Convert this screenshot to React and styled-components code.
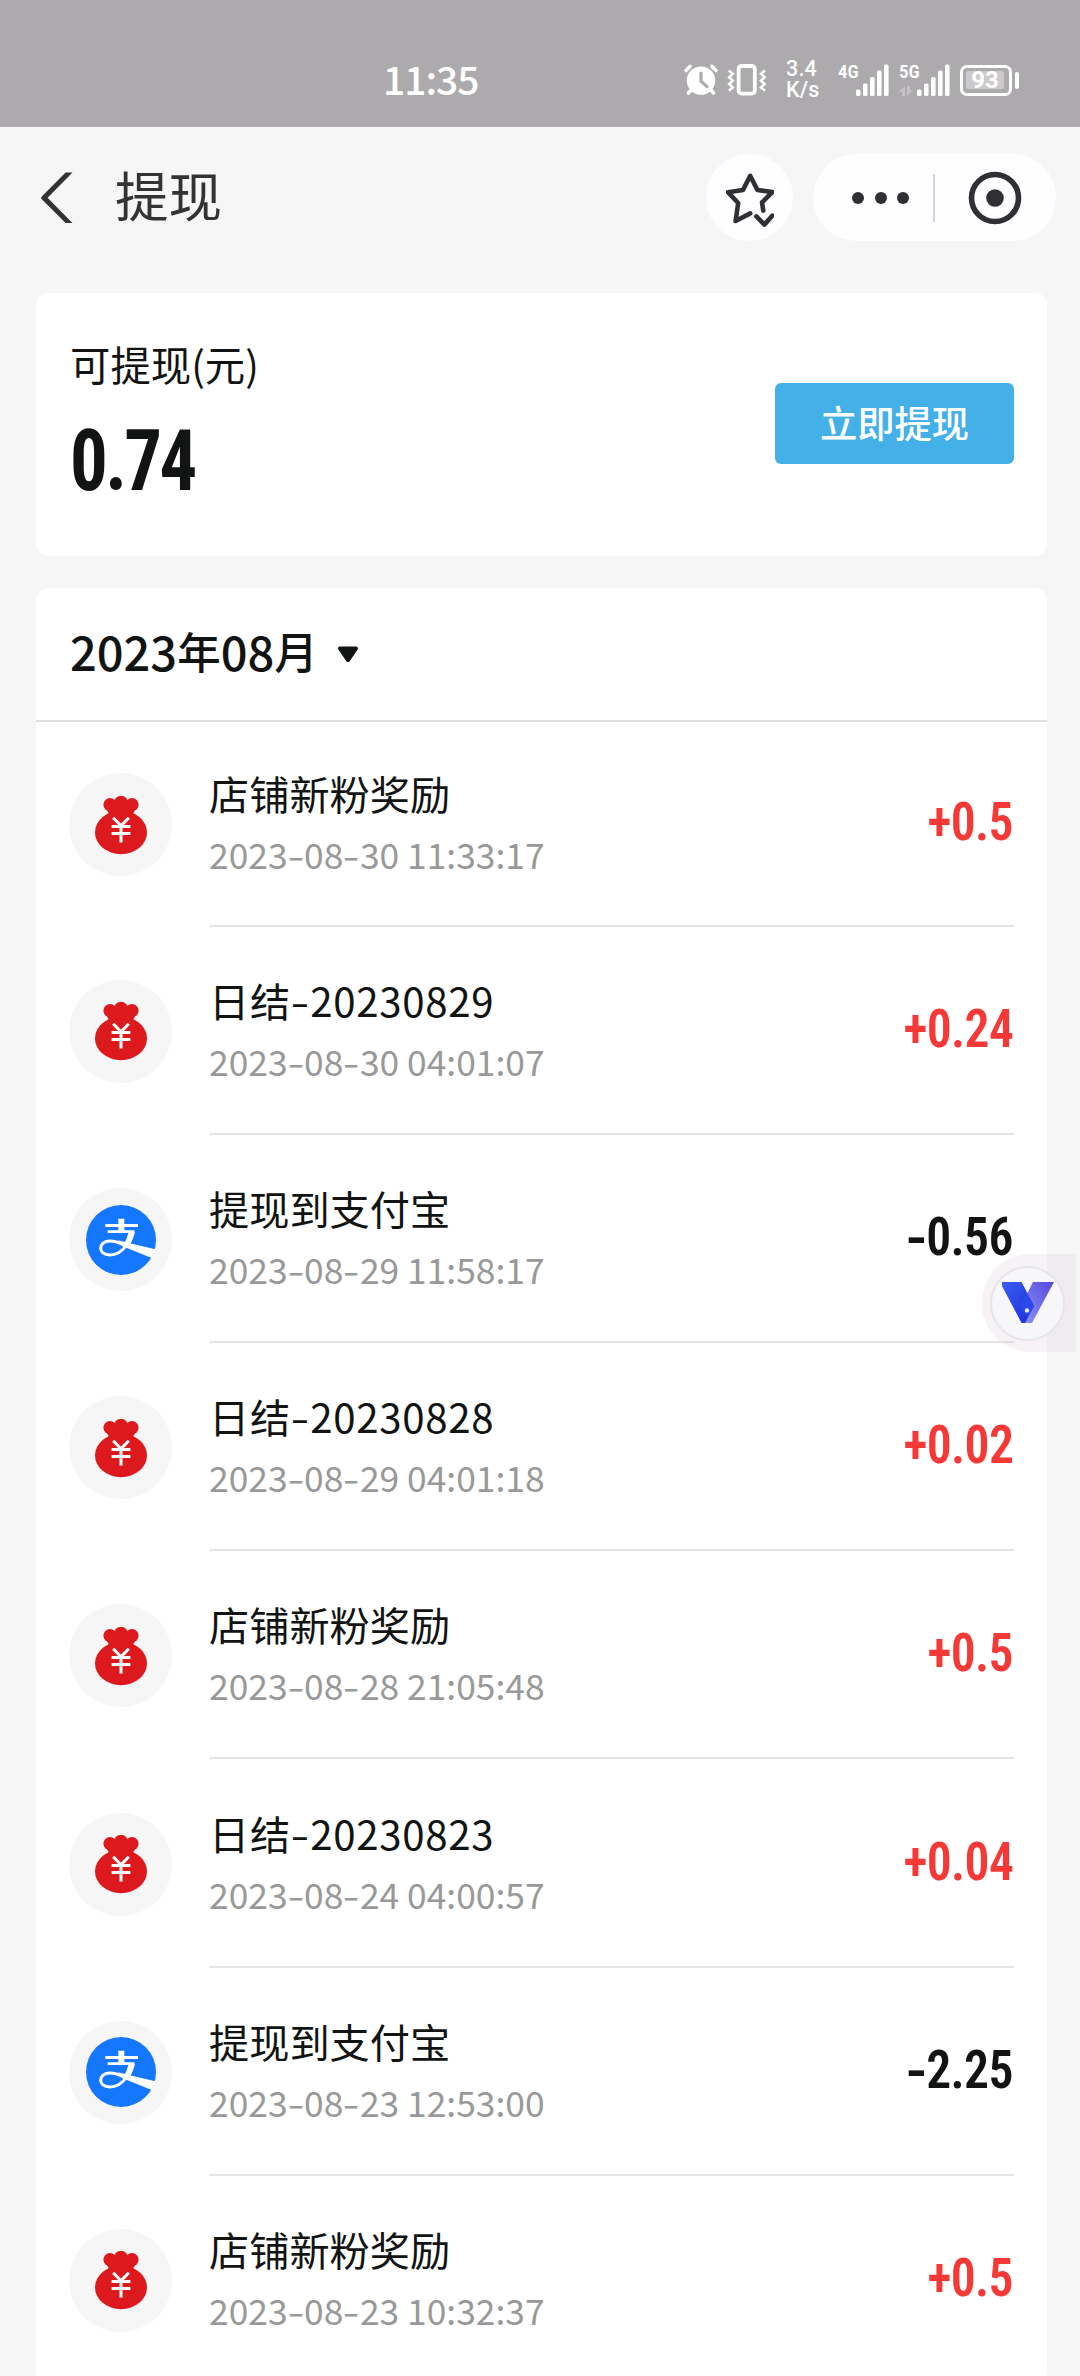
import styled, { createGlobalStyle } from 'styled-components'

const records = [
  { id: 1, type: 'bag', title: '店铺新粉奖励', time: '2023-08-30 11:33:17', amount: '+0.5' },
  { id: 2, type: 'bag', title: '日结-20230829', time: '2023-08-30 04:01:07', amount: '+0.24' },
  { id: 3, type: 'alipay', title: '提现到支付宝', time: '2023-08-29 11:58:17', amount: '-0.56' },
  { id: 4, type: 'bag', title: '日结-20230828', time: '2023-08-29 04:01:18', amount: '+0.02' },
  { id: 5, type: 'bag', title: '店铺新粉奖励', time: '2023-08-28 21:05:48', amount: '+0.5' },
  { id: 6, type: 'bag', title: '日结-20230823', time: '2023-08-24 04:00:57', amount: '+0.04' },
  { id: 7, type: 'alipay', title: '提现到支付宝', time: '2023-08-23 12:53:00', amount: '-2.25' },
  { id: 8, type: 'bag', title: '店铺新粉奖励', time: '2023-08-23 10:32:37', amount: '+0.5' },
]

// the default hyphen is too short, so every one gets its own span
function Dashed({ text }) {
  return text.split(/(-)/).map((part, i) => (part === '-' ? <Dash key={i}>-</Dash> : part))
}

function AlarmIcon() {
  return (
    <svg width="36" height="34" viewBox="0 0 36 34">
      <g stroke="#fff" strokeLinecap="round" strokeWidth="3.6">
        <path d="M3 7.5l4.2-4.2M33 7.5l-4.2-4.2" />
        <path d="M9 26l-3.6 4M27 26l3.6 4" />
      </g>
      <circle cx="18" cy="17.6" r="14.2" fill="#fff" />
      <path d="M18 10v8.2l6 5.4" fill="none" stroke="#acaaac" strokeWidth="3.2" strokeLinecap="round" />
    </svg>
  )
}

function VibrateIcon() {
  return (
    <svg width="40" height="34" viewBox="0 0 40 34" fill="none" stroke="#fff">
      <rect x="11.6" y="3" width="16.2" height="27.6" rx="3" strokeWidth="3.8" />
      <path d="M1.8 7.5l4 3.4-3.6 3.4 3.6 3.4-3.6 3.4 3.6 3.4-4 3.2" strokeWidth="2.6" />
      <path d="M38 7.5l-4 3.4 3.6 3.4-3.6 3.4 3.6 3.4-3.6 3.4 4 3.2" strokeWidth="2.6" />
    </svg>
  )
}

function Bars() {
  return (
    <svg width="33" height="32" viewBox="0 0 33 32" fill="#fff">
      <rect x="0" y="25.5" width="4.6" height="6.5" rx="1.6" />
      <rect x="7" y="19.5" width="4.6" height="12.5" rx="1.6" />
      <rect x="14" y="13" width="4.6" height="19" rx="1.6" />
      <rect x="21" y="6.5" width="4.6" height="25.5" rx="1.6" />
      <rect x="28" y="0.5" width="4.6" height="31.5" rx="1.6" />
    </svg>
  )
}

function DataArrows() {
  return (
    <svg width="14" height="10" viewBox="0 0 14 10" fill="#c4c2c4">
      <path d="M6 10V0L0 5.4h3V10zM8 0v10L14 4.6h-3V0z" />
    </svg>
  )
}

function BackIcon() {
  return (
    <svg width="32" height="52" viewBox="0 0 32 52">
      <path d="M24.6 0.5h6.9L6.6 25.8 31.5 51h-6.9L0.8 27.2q-1.2-1.3 0-2.6z" fill="#333" />
    </svg>
  )
}

function StarIcon() {
  return (
    <svg width="48" height="54" viewBox="0 0 48 54" fill="none" stroke="#303032" strokeWidth="4.6" strokeLinecap="round" strokeLinejoin="round">
      <path d="M37.3 37.6L36 29.4 46.4 19 31.4 17 24.2 2.8 17 17 2 19.2 12.2 30 9.6 48 24.2 40.4" />
      <path d="M30.4 43.4l8 8.2 8-9" />
    </svg>
  )
}

function TargetIcon() {
  return (
    <svg width="54" height="54" viewBox="0 0 54 54">
      <circle cx="27" cy="27" r="23.5" fill="none" stroke="#303032" strokeWidth="5.6" />
      <circle cx="27" cy="27" r="8.8" fill="#303032" />
    </svg>
  )
}

function BagIcon() {
  return (
    <svg width="54" height="60" viewBox="0 0 54 60">
      <g fill="#dc1a1e">
        <ellipse cx="27" cy="37.4" rx="26" ry="21.8" />
        <circle cx="16" cy="9.6" r="6.6" />
        <circle cx="27" cy="7.8" r="7" />
        <circle cx="38" cy="9.6" r="6.6" />
        <path d="M10.2 12.6q4.8 4 4.6 8L6.6 26h40.8l-8.2-5.4q-.2-4 4.6-8L38 5H16z" />
      </g>
      <path d="M19.2 22.8l7.8 8 7.8-8M27 30v17.4M17.6 31.4h18.8M17.6 38.4h18.8" fill="none" stroke="#fff" strokeWidth="3" />
    </svg>
  )
}

function AlipayIcon() {
  return (
    <svg width="70" height="70" viewBox="0 0 210 210">
      <circle cx="105" cy="105" r="105" fill="#1477fe" />
      <g fill="#fff">
        <path d="M58 57h98v9H58zM97 41h18v40H97zM65 76h80v8H65z" />
        <path d="M128 80h19q-7 30-21 46l-14-7q12-18 16-39z" />
        <path d="M96 106q20 4 48 12l64 15q-3 13-11 26L110 124z" />
      </g>
      <path
        d="M122 120C108 140 92 150 72 150 34 150 36 110 70 108 90 107 102 114 118 122"
        fill="none"
        stroke="#fff"
        strokeWidth="9"
      />
    </svg>
  )
}

function VLogo() {
  return (
    <svg width="54" height="44" viewBox="0 0 54 44">
      <defs>
        <linearGradient id="vLeft" x1="0" y1="0" x2="1" y2="1">
          <stop offset="0" stopColor="#3a5df5" />
          <stop offset="1" stopColor="#1a30d6" />
        </linearGradient>
        <linearGradient id="vRight" x1="1" y1="0" x2="0" y2="1">
          <stop offset="0" stopColor="#5548dc" />
          <stop offset="1" stopColor="#8d94f6" />
        </linearGradient>
      </defs>
      <path d="M32 1h21L31 42h-7l-3-19z" fill="url(#vRight)" />
      <path d="M1 1h19.6L33 25l-9 17h-3.4L1 5z" fill="url(#vLeft)" />
      <path d="M25.4 11L33 25l-6 11-8-10z" fill="#2d48ea" />
      <circle cx="26" cy="29.4" r="2.2" fill="#e4e9ff" />
    </svg>
  )
}

function App() {
  return (
    <Page>
      <GlobalStyle />
      <StatusBar>
        <Clock>11:35</Clock>
        <AlarmIcon />
        <Vibrate>
          <VibrateIcon />
        </Vibrate>
        <Speed>
          <span>3.4</span>
          <span>K/s</span>
        </Speed>
        <Signal>
          <Network>
            <span>4G</span>
          </Network>
          <Bars />
        </Signal>
        <Signal>
          <Network>
            <span>5G</span>
            <DataArrows />
          </Network>
          <Bars />
        </Signal>
        <Battery>
          <Level>93</Level>
        </Battery>
        <Nub />
      </StatusBar>

      <NavBar>
        <BackIcon />
        <PageTitle>提现</PageTitle>
        <RoundButton>
          <StarIcon />
        </RoundButton>
        <Capsule>
          <Dots>
            <i />
            <i />
            <i />
          </Dots>
          <Split />
          <TargetIcon />
        </Capsule>
      </NavBar>

      <Balance>
        <div>
          <Label>可提现(元)</Label>
          <Total>0.74</Total>
        </div>
        <Withdraw>立即提现</Withdraw>
      </Balance>

      <Records>
        <Month>
          <b>2023</b>年<b>08</b>月
          <svg width="22" height="17" viewBox="0 0 22 17">
            <path d="M3 2.4h16L11 14z" fill="#111413" stroke="#111413" strokeWidth="4" strokeLinejoin="round" />
          </svg>
        </Month>
        {records.map((item) => (
          <Row key={item.id}>
            <Avatar>{item.type === 'bag' ? <BagIcon /> : <AlipayIcon />}</Avatar>
            <Content>
              <div>
                <Title $spaced={item.title.includes('-')}>
                  <Dashed text={item.title} />
                </Title>
                <Time>
                  <Dashed text={item.time} />
                </Time>
              </div>
              <Amount $income={item.amount[0] === '+'}>
                <Dashed text={item.amount} />
              </Amount>
            </Content>
          </Row>
        ))}
      </Records>

      <Floating>
        <FloatingBall>
          <VLogo />
        </FloatingBall>
      </Floating>
    </Page>
  )
}

export default App

const GlobalStyle = createGlobalStyle`
  * {
    box-sizing: border-box;
  }
  body {
    margin: 0;
    background: #f6f6f6;
  }
  svg {
    display: block;
    flex-shrink: 0;
  }
`

const Page = styled.div`
  position: relative;
  width: 1080px;
  height: 2376px;
  overflow: hidden;
  background: #f6f6f6;
  color: #111413;
  font-family: 'Noto Sans CJK SC', sans-serif;
`

const StatusBar = styled.header`
  display: flex;
  align-items: center;
  height: 127px;
  padding: 33px 0 0 383px;
  background: #acaaac;
  color: #fff;
`

const Clock = styled.div`
  width: 300px;
  font-size: 39px;
  font-weight: 500;
  line-height: 40px;
  letter-spacing: -1px;
  margin-top: -4px;
`

const Vibrate = styled.div`
  margin-left: 8px;
`

const Speed = styled.div`
  display: flex;
  flex-direction: column;
  width: 52px;
  margin-left: 19px;
  font-family: Roboto, sans-serif;
  font-size: 21.5px;
  font-weight: 500;
  line-height: 20.6px;
  letter-spacing: 0.2px;
`

const Signal = styled.div`
  display: flex;
  align-items: flex-end;
  height: 32px;
  margin-right: 10px;
`

const Network = styled.div`
  display: flex;
  flex-direction: column;
  justify-content: space-between;
  height: 32px;
  width: 18px;
  font-family: 'Roboto Condensed', Roboto, sans-serif;
  font-size: 19px;
  font-weight: 600;
  line-height: 15px;
`

const Battery = styled.div`
  width: 52px;
  height: 31px;
  padding: 3px;
  border: 3.5px solid #fff;
  border-radius: 7px;
`

const Level = styled.div`
  width: 38px;
  height: 18px;
  background: #cccacc;
  border-radius: 2px;
  font-family: Roboto, sans-serif;
  font-size: 24px;
  font-weight: 700;
  line-height: 19px;
  text-align: center;
`

const Nub = styled.div`
  width: 4px;
  height: 17px;
  margin-left: 3px;
  background: #fff;
  border-radius: 2px;
`

const NavBar = styled.nav`
  display: flex;
  align-items: center;
  height: 166px;
  padding: 0 24px 25px 41px;
`

const PageTitle = styled.h1`
  flex: 1;
  margin: 0 0 0 42px;
  font-size: 53.5px;
  line-height: 60px;
  padding-bottom: 8px;
  font-weight: 400;
  color: #333;
`

const RoundButton = styled.div`
  display: flex;
  align-items: center;
  justify-content: center;
  width: 87px;
  height: 87px;
  padding-top: 4px;
  margin-right: 20px;
  background: #fefdff;
  border-radius: 50%;
`

const Capsule = styled.div`
  display: flex;
  align-items: center;
  width: 243px;
  height: 87px;
  padding-left: 39px;
  background: #fefdff;
  border-radius: 44px;
`

const Dots = styled.div`
  display: flex;
  gap: 10.5px;
  i {
    width: 12px;
    height: 12px;
    background: #303032;
    border-radius: 50%;
  }
`

const Split = styled.div`
  width: 1.5px;
  height: 48px;
  margin: 0 33px 0 24px;
  background: #d6d4d8;
`

const Balance = styled.section`
  display: flex;
  align-items: flex-start;
  justify-content: space-between;
  width: 1011px;
  height: 263px;
  margin: 0 0 32px 36px;
  padding: 42px 33px 0 34px;
  background: #fff;
  border-radius: 12px;
`

const Label = styled.div`
  font-size: 40.4px;
  line-height: 58px;
`

const Total = styled.div`
  margin-top: 18px;
  font-family: 'Roboto Condensed', Roboto, sans-serif;
  font-size: 85px;
  font-weight: 700;
  line-height: 100px;
  letter-spacing: -3px;
  transform: scaleX(0.88);
  transform-origin: left;
`

const Withdraw = styled.button`
  width: 239px;
  height: 81px;
  margin-top: 48px;
  padding: 0 0 4px;
  border: 0;
  border-radius: 6px;
  background: #43b0e7;
  color: #fff;
  font-family: inherit;
  font-size: 37.3px;
  font-weight: 500;
`

const Records = styled.section`
  width: 1011px;
  margin-left: 36px;
  background: #fff;
  border-radius: 12px;
`

const Month = styled.div`
  display: flex;
  align-items: center;
  height: 134px;
  padding: 0 0 8px 34px;
  border-bottom: 2px solid #dfe0e0;
  font-size: 43.5px;
  font-weight: 500;
  b {
    font-size: 47px;
    font-weight: 500;
  }
  svg {
    margin: 8px 0 0 19px;
  }
`

const Row = styled.div`
  display: flex;
  height: 208.15px;
  align-items: center;
  padding: 0 33px 0 33px;
  &:nth-child(2) {
    height: 204.9px;
  }
`

const Avatar = styled.div`
  display: flex;
  align-items: center;
  justify-content: center;
  flex-shrink: 0;
  width: 103px;
  height: 103px;
  margin-top: 1px;
  background: #f6f6f6;
  border-radius: 50%;
`

const Content = styled.div`
  display: flex;
  align-items: center;
  justify-content: space-between;
  flex: 1;
  height: 100%;
  margin-left: 37px;
  border-bottom: 2px solid #e4e5e6;
`

const Dash = styled.span`
  display: inline-block;
  margin: 0 0.06em;
  transform: translateY(0.01em) scaleX(1.35);
`

const Title = styled.div`
  font-size: 40.2px;
  line-height: 61px;
  letter-spacing: ${(props) => (props.$spaced ? '0.7px' : '0')};
`

const Time = styled.div`
  font-size: 35.4px;
  line-height: 61px;
  color: #999;
`

const Amount = styled.div`
  margin-right: 1px;
  padding-bottom: 2px;
  font-family: 'Roboto Condensed', Roboto, sans-serif;
  font-size: 54px;
  font-weight: 600;
  line-height: 60px;
  letter-spacing: -0.7px;
  color: ${(props) => (props.$income ? '#f53936' : '#111413')};
  transform: scaleX(0.92);
  transform-origin: right;
  ${Dash} {
    margin: 0 0.04em;
    transform: translateY(0.03em) scaleX(1.35);
  }
`

const Floating = styled.div`
  position: absolute;
  top: 1254px;
  left: 982px;
  display: flex;
  align-items: center;
  width: 94px;
  height: 98px;
  padding-left: 8px;
  background: rgba(225, 205, 215, 0.25);
  border-radius: 48px 0 0 48px;
`

const FloatingBall = styled.div`
  display: flex;
  align-items: center;
  justify-content: center;
  width: 75px;
  height: 75px;
  background: #f7f7f9;
  border: 2px solid #e6e5e8;
  border-radius: 50%;
`
